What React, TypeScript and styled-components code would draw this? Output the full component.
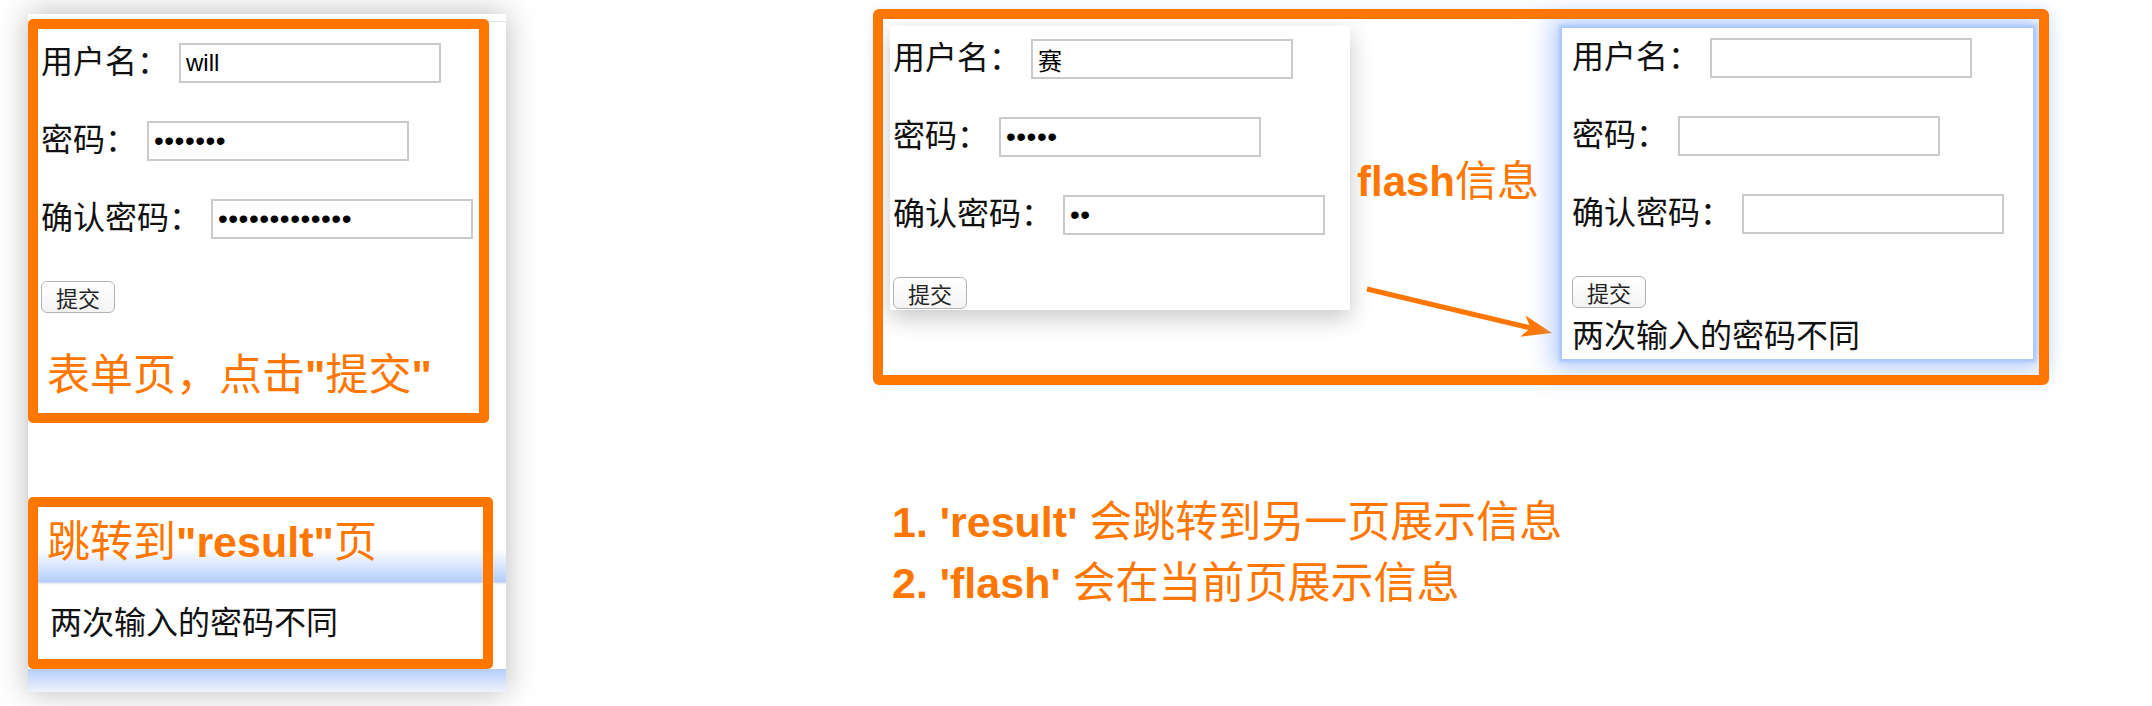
import styled, { createGlobalStyle, css } from 'styled-components'

const ORANGE = '#ff7700'
const CJK = `"Noto Sans CJK SC", sans-serif`
const MIXED = `"Liberation Sans", "Noto Sans CJK SC", sans-serif`

const GlobalStyle = createGlobalStyle`
  html, body {
    margin: 0;
    padding: 0;
    background: #fff;
  }
  body {
    width: 2152px;
    height: 706px;
    overflow: hidden;
    font-family: ${MIXED};
  }
`

const Page = styled.div`
  display: flex;
  align-items: flex-start;
  gap: 367px;
  padding: 9px 0 0 28px;
`

/* ---------- left: the stitched screenshot of two pages ---------- */

const LeftPanel = styled.div`
  display: flex;
  flex-direction: column;
  width: 478px;
  height: 678px;
  margin-top: 5px;
  background: linear-gradient(to bottom, #fff 0 7px, #e2e2e2 7px 8px, #fff 8px);
  box-shadow: 0 0 30px rgba(0, 0, 0, 0.28);
`

const Frame = styled.div<{ $w: number; $h: number }>`
  box-sizing: border-box;
  width: ${(p) => p.$w}px;
  height: ${(p) => p.$h}px;
  border: 10px solid ${ORANGE};
  border-radius: 5px;
`

const FormFrame = styled(Frame)`
  margin-top: 5px;
  display: flex;
  flex-direction: column;
  align-items: flex-start;
  padding: 14px 0 0 3px;
  background: #fff;
`

const ResultStrip = styled.div`
  margin-top: 74px;
  background: linear-gradient(
    to bottom,
    #fff 0px,
    #fff 52px,
    #b4cefa 85px,
    #e6ebf3 86px,
    #fff 88px
  );
`

const ResultFrame = styled(Frame)`
  display: flex;
  flex-direction: column;
  padding-left: 9px;
`

const BottomBand = styled.div`
  height: 23px;
  background: linear-gradient(to bottom, #b4cefa, #eef3fd);
`

const Caption = styled.div<{ $mt: number; $ml?: number }>`
  margin-top: ${(p) => p.$mt}px;
  margin-left: ${(p) => p.$ml ?? 0}px;
  font-size: 43px;
  line-height: 50px;
  color: ${ORANGE};
  white-space: nowrap;
`

const B = styled.span`
  font-weight: 700;
`

const Message = styled.div<{ $mt: number; $ml?: number }>`
  margin-top: ${(p) => p.$mt}px;
  margin-left: ${(p) => p.$ml ?? 0}px;
  font-family: ${CJK};
  font-size: 32px;
  line-height: 44px;
  color: #111;
  white-space: nowrap;
`

/* ---------- the form as the pages draw it ---------- */

const Field = styled.div`
  display: flex;
  align-items: center;
  height: 40px;
  & + & {
    margin-top: 38px;
  }
`

const Label = styled.span`
  font-family: ${CJK};
  font-size: 32px;
  line-height: 40px;
  color: #111;
  margin: 0 10px 8px 0;
  white-space: nowrap;
`

const TextBox = styled.input`
  box-sizing: border-box;
  width: 262px;
  height: 40px;
  margin: 0;
  padding: 0 5px;
  border: 2px solid #cacaca;
  border-radius: 0;
  background: #fff;
  outline: none;
  font-family: ${MIXED};
  font-size: 24px;
  color: #000;
  &[type='password'] {
    font-size: 28px;
    letter-spacing: 0.5px;
  }
`

const SubmitButton = styled.button`
  box-sizing: border-box;
  height: 32px;
  margin-top: 42px;
  padding: 0 14px;
  border: 1px solid #b3b3b3;
  border-radius: 6px;
  background: linear-gradient(to bottom, #fff, #f4f4f4);
  font-family: ${CJK};
  font-size: 22px;
  line-height: 30px;
  color: #222;
`

type FormValues = { user: string; pass: string; confirm: string }

const LoginForm = ({ values }: { values: FormValues }) => (
  <>
    <Field>
      <Label>用户名：</Label>
      <TextBox type="text" value={values.user} readOnly />
    </Field>
    <Field>
      <Label>密码：</Label>
      <TextBox type="password" value={values.pass} readOnly />
    </Field>
    <Field>
      <Label>确认密码：</Label>
      <TextBox type="password" value={values.confirm} readOnly />
    </Field>
    <SubmitButton type="button">提交</SubmitButton>
  </>
)

/* ---------- right: flash comparison ---------- */

const RightColumn = styled.div`
  display: flex;
  flex-direction: column;
`

// the orange outline sits over the cards' glow, so it is drawn on top
const CompareFrame = styled.div`
  position: relative;
  box-sizing: border-box;
  width: 1176px;
  height: 376px;
  display: flex;
  align-items: flex-start;
  padding: 17px 0 0 17px;
  border-radius: 6px;
  box-shadow: 0 0 14px rgba(190, 210, 255, 0.35);
  &::after {
    content: '';
    position: absolute;
    inset: 0;
    border: 10px solid ${ORANGE};
    border-radius: 6px;
    pointer-events: none;
  }
`

const Card = styled.div<{
  $w: number
  $h: number
  $pad: number
  $mt?: number
  $glow: 'gray' | 'blue'
}>`
  box-sizing: border-box;
  flex: none;
  display: flex;
  flex-direction: column;
  align-items: flex-start;
  width: ${(p) => p.$w}px;
  height: ${(p) => p.$h}px;
  margin-top: ${(p) => p.$mt ?? 0}px;
  padding: ${(p) => p.$pad}px 0 0 ${(p) => (p.$glow === 'blue' ? 10 : 3)}px;
  background: #fff;
  overflow: hidden;
  ${(p) =>
    p.$glow === 'blue'
      ? css`
          box-shadow: 0 0 3px 3px #abc7fc, 0 0 22px 10px rgba(135, 172, 250, 0.6);
        `
      : css`
          box-shadow: 0 8px 22px rgba(0, 0, 0, 0.22);
        `}
`

const Middle = styled.div`
  flex: none;
  width: 212px;
  display: flex;
  flex-direction: column;
  padding-left: 7px;
  box-sizing: border-box;
`

const FlashNote = styled.div`
  margin-top: 131px;
  font-size: 42px;
  line-height: 50px;
  color: ${ORANGE};
  white-space: nowrap;
`

const ArrowSvg = styled.svg`
  display: block;
  margin: 73px 0 0 -7px;
`

const Arrow = () => (
  <ArrowSvg width="212" height="64" viewBox="0 0 212 64">
    <line x1="17" y1="9" x2="181" y2="48" stroke={ORANGE} strokeWidth="5" />
    <polygon
      points="202,53 170.3,56.8 180.6,47.9 175.4,35.4"
      fill={ORANGE}
    />
  </ArrowSvg>
)

const Notes = styled.div`
  margin: 107px 0 0 19px;
  color: ${ORANGE};
  font-size: 43px;
  line-height: 61px;
  white-space: nowrap;
`

export default function App() {
  return (
    <>
      <GlobalStyle />
      <Page>
        <LeftPanel>
          <FormFrame $w={461} $h={404}>
            <LoginForm values={{ user: 'will', pass: '1234567', confirm: '1234567890123' }} />
            <Caption $mt={37} $ml={6}>
              表单页，点击<B>"</B>提交<B>"</B>
            </Caption>
          </FormFrame>
          <ResultStrip>
            <ResultFrame $w={465} $h={172}>
              <Caption $mt={10}>
                跳转到<B>"result"</B>页
              </Caption>
              <Message $mt={31} $ml={3}>
                两次输入的密码不同
              </Message>
            </ResultFrame>
          </ResultStrip>
          <BottomBand />
        </LeftPanel>

        <RightColumn>
          <CompareFrame>
            <Card $w={460} $h={284} $pad={13} $glow="gray">
              <LoginForm values={{ user: '赛', pass: '12345', confirm: '12' }} />
            </Card>
            <Middle>
              <FlashNote>
                <B>flash</B>信息
              </FlashNote>
              <Arrow />
            </Middle>
            <Card $w={471} $h={331} $pad={10} $mt={2} $glow="blue">
              <LoginForm values={{ user: '', pass: '', confirm: '' }} />
              <Message $mt={3}>两次输入的密码不同</Message>
            </Card>
          </CompareFrame>
          <Notes>
            <div>
              <B>1. 'result'</B> 会跳转到另一页展示信息
            </div>
            <div>
              <B>2. 'flash'</B> 会在当前页展示信息
            </div>
          </Notes>
        </RightColumn>
      </Page>
    </>
  )
}
